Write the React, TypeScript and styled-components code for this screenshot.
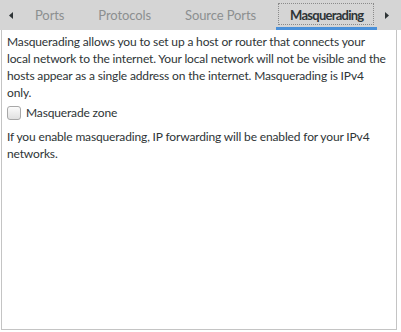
import React from "react";
import styled, { createGlobalStyle } from "styled-components";

const GlobalStyle = createGlobalStyle`
  html, body {
    margin: 0;
    padding: 0;
    background: #ffffff;
  }
  body {
    font-family: Lato, "Noto Sans", sans-serif;
    font-size: 13px;
    color: #2e3436;
  }
`;

// Components
const Notebook = styled.div`
  width: 401px;
  height: 332px;
  display: flex;
  flex-direction: column;
`;

const Header = styled.div`
  height: 30px;
  background: #d5d5d5;
  display: flex;
  align-items: stretch;
  flex-shrink: 0;
`;

const Arrow = styled.div<{ $side: "left" | "right" }>`
  width: 18px;
  display: flex;
  align-items: center;
  justify-content: flex-start;
  padding-left: ${(p) => (p.$side === "left" ? "9px" : "2px")};
  box-sizing: border-box;
  flex-shrink: 0;
`;

const TabStrip = styled.div`
  flex: 1;
  display: flex;
  align-items: stretch;
  overflow: hidden;
`;

const Tab = styled.div<{ $active?: boolean }>`
  padding: 0 17px;
  display: flex;
  align-items: center;
  white-space: nowrap;
  letter-spacing: -0.1px;
  color: ${(p) => (p.$active ? "#2e3436" : "#8c8f90")};
  font-weight: ${(p) => (p.$active ? 700 : 400)};
  position: relative;
  ${(p) =>
    p.$active &&
    `
    padding: 0 14px;
    margin: 0 3px;
    letter-spacing: -0.75px;
    box-shadow: inset 0 -3px 0 #4a90d9;
  `}
`;

const FocusRing = styled.div`
  position: absolute;
  left: 2px;
  right: 3px;
  top: 3px;
  bottom: 5px;
  border: 1px dotted #8a8a8a;
`;

const Page = styled.div`
  flex: 1;
  margin: 0 4px 2px 1px;
  border: 1px solid #c4c4c4;
  border-top: none;
  padding: 3px 0 0 5px;
  font-size: 12px;
  letter-spacing: -0.15px;
`;

const Paragraph = styled.p`
  margin: 0;
  line-height: 17px;
`;

const Line = styled.span`
  display: block;
  white-space: nowrap;
`;

const CheckRow = styled.label`
  display: flex;
  align-items: center;
  gap: 5px;
  height: 17px;
  margin: 3px 0 7px 0;
  line-height: 17px;
`;

const CheckBox = styled.span`
  width: 12px;
  height: 12px;
  border: 1px solid #a8a8a8;
  border-radius: 3px;
  background: linear-gradient(#fbfbfb, #e0e0e0);
  flex-shrink: 0;
`;

const tabs = ["Ports", "Protocols", "Source Ports", "Masquerading"];

const intro = [
  "Masquerading allows you to set up a host or router that connects your",
  "local network to the internet. Your local network will not be visible and the",
  "hosts appear as a single address on the internet. Masquerading is IPv4",
  "only.",
];

const note = [
  "If you enable masquerading, IP forwarding will be enabled for your IPv4",
  "networks.",
];

export default function App() {
  return (
    <>
      <GlobalStyle />
      <Notebook>
        <Header>
          <Arrow $side="left">
            <svg width="4" height="7" viewBox="0 0 4 7">
              <path d="M4 0 L0 3.5 L4 7 Z" fill="#2e3436" />
            </svg>
          </Arrow>
          <TabStrip>
            {tabs.map((t) => (
              <Tab key={t} $active={t === "Masquerading"}>
                {t === "Masquerading" && <FocusRing />}
                {t}
              </Tab>
            ))}
          </TabStrip>
          <Arrow $side="right">
            <svg width="4" height="7" viewBox="0 0 4 7">
              <path d="M0 0 L4 3.5 L0 7 Z" fill="#2e3436" />
            </svg>
          </Arrow>
        </Header>
        <Page>
          <Paragraph>
            {intro.map((l) => (
              <Line key={l}>{l}</Line>
            ))}
          </Paragraph>
          <CheckRow>
            <CheckBox />
            Masquerade zone
          </CheckRow>
          <Paragraph>
            {note.map((l) => (
              <Line key={l}>{l}</Line>
            ))}
          </Paragraph>
        </Page>
      </Notebook>
    </>
  );
}
